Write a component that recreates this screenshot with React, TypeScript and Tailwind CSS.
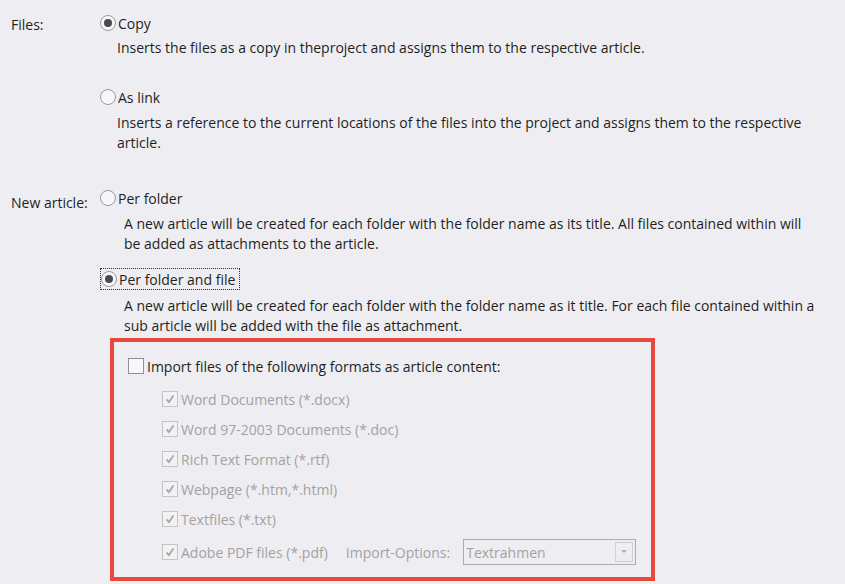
import React from "react";

const font = { fontFamily: '"Open Sans", "Noto Sans", sans-serif' };

const Radio = ({ checked }: { checked?: boolean }) => (
  <span className="inline-flex h-[16px] w-[16px] shrink-0 items-center justify-center rounded-full border border-[#9a9a9a] bg-[#f7f7f9]">
    {checked && <span className="h-[8px] w-[8px] rounded-full bg-[#4a4a4a]" />}
  </span>
);

const DisabledCheck = () => (
  <span className="inline-flex h-[16px] w-[16px] shrink-0 items-center justify-center border border-[#c4c4c4] bg-[#f2f2f4]">
    <svg width="12" height="12" viewBox="0 0 12 12">
      <path d="M2.5 6.5 L5 9 L9.5 2.5" fill="none" stroke="#a8a8a8" strokeWidth="1.8" />
    </svg>
  </span>
);

const formats = [
  "Word Documents (*.docx)",
  "Word 97-2003 Documents (*.doc)",
  "Rich Text Format (*.rtf)",
  "Webpage (*.htm,*.html)",
  "Textfiles (*.txt)",
];

export default function App() {
  return (
    <div className="h-[584px] w-[845px] overflow-hidden bg-[#eeeef2] text-[14px] text-[#1e1e1e]" style={font}>
      <div className="flex pl-[11px] pt-[13px]">
        <div className="w-[89px] pt-[1px]">Files:</div>
        <div className="flex flex-col">
          <div className="flex h-[20px] items-center gap-[2px]">
            <Radio checked />
            <span>Copy</span>
          </div>
          <p className="mt-[5px] ml-[17px] leading-[20px]">
            Inserts the files as a copy in theproject and assigns them to the respective article.
          </p>
          <div className="mt-[29px] flex h-[20px] items-center gap-[2px]">
            <Radio />
            <span>As link</span>
          </div>
          <p className="mt-[6px] ml-[17px] w-[710px] leading-[20px]">
            Inserts a reference to the current locations of the files into the project and assigns them to the respective article.
          </p>
        </div>
      </div>

      <div className="mt-[35px] flex pl-[11px]">
        <div className="w-[89px] pt-[4px]">New article:</div>
        <div className="flex flex-col">
          <div className="flex h-[20px] items-center gap-[2px]">
            <Radio />
            <span>Per folder</span>
          </div>
          <p className="mt-[6px] ml-[24px] w-[690px] leading-[20px]">
            A new article will be created for each folder with the folder name as its title. All files contained within will be added as attachments to the article.
          </p>
          <div className="mt-[14px] flex h-[22px] w-fit items-center gap-[2px] border border-dotted border-[#333] pr-[4px]">
            <Radio checked />
            <span>Per folder and file</span>
          </div>
          <p className="mt-[6px] ml-[24px] w-[710px] leading-[20px]">
            A new article will be created for each folder with the folder name as it title. For each file contained within a sub article will be added with the file as attachment.
          </p>
        </div>
      </div>

      <div className="ml-[110px] mt-[2px] h-[243px] w-[545px] border-[4px] border-[#e8493f] pl-[14px] pt-[14px]">
        <div className="flex h-[20px] items-center gap-[3px]">
          <span className="h-[16px] w-[16px] border border-[#8f8f8f] bg-[#f7f7f9]" />
          <span>Import files of the following formats as article content:</span>
        </div>
        <div className="mt-[13px] flex flex-col gap-[10px] pl-[34px] text-[#a2a2a2]">
          {formats.map((f) => (
            <div key={f} className="flex h-[20px] items-center gap-[3px]">
              <DisabledCheck />
              <span>{f}</span>
            </div>
          ))}
          <div className="flex h-[26px] items-center gap-[3px]">
            <DisabledCheck />
            <span>Adobe PDF files (*.pdf)</span>
            <span className="ml-[15px]">Import-Options:</span>
            <div className="ml-[10px] flex h-[26px] w-[173px] items-center justify-between border border-[#acacac] bg-[#eeeef2] pl-[2px] pr-[2px]">
              <span>Textrahmen</span>
              <span className="flex h-[20px] w-[18px] items-center justify-center border border-[#d0d0d0]">
                <svg width="6" height="4" viewBox="0 0 6 4"><path d="M0 0 H6 L3 3 Z" fill="#b0b0b0" /></svg>
              </span>
            </div>
          </div>
        </div>
      </div>
    </div>
  );
}
